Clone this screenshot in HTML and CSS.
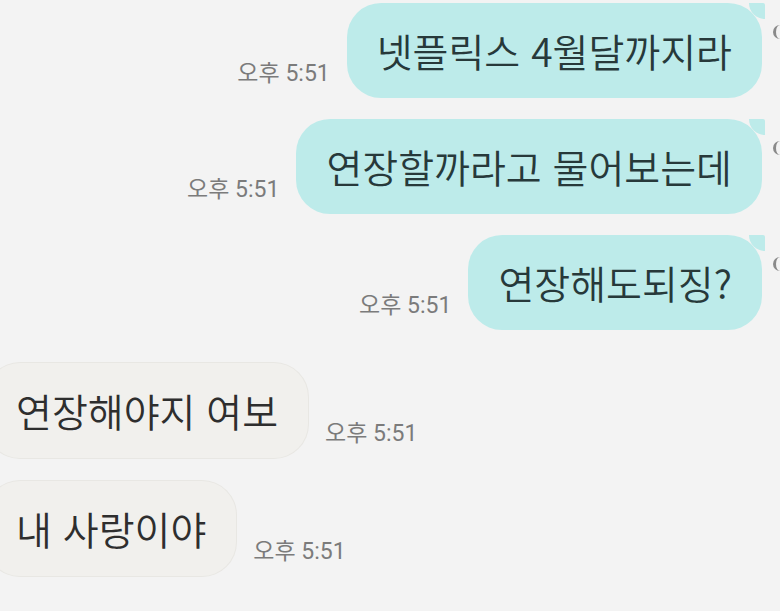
FILE: index.html
```html
<!DOCTYPE html>
<html lang="ko">
<head>
  <meta charset="UTF-8">
  <meta name="viewport" content="width=device-width, initial-scale=1.0">
  <title>채팅</title>
  <link rel="stylesheet" href="styles.css">
</head>
<body>
  <div class="chat">
    <div class="row sent">
      <span class="time">오후 5:51</span>
      <div class="bubble">넷플릭스 4월달까지라</div>
      <span class="mark"></span>
    </div>
    <div class="row sent">
      <span class="time">오후 5:51</span>
      <div class="bubble">연장할까라고 물어보는데</div>
      <span class="mark"></span>
    </div>
    <div class="row sent">
      <span class="time">오후 5:51</span>
      <div class="bubble">연장해도되징?</div>
      <span class="mark"></span>
    </div>
    <div class="row received first">
      <div class="bubble">연장해야지 여보</div>
      <span class="time">오후 5:51</span>
    </div>
    <div class="row received">
      <div class="bubble">내 사랑이야</div>
      <span class="time">오후 5:51</span>
    </div>
  </div>
</body>
</html>
```

FILE: styles.css
```css
body {
  margin: 0;
  padding: 0;
  width: 780px;
  height: 611px;
  overflow: hidden;
  background-color: #f3f3f3;
  font-family: "Noto Sans CJK KR", "Noto Sans", sans-serif;
}

.chat {
  padding-top: 3px;
}

.row {
  display: flex;
  align-items: flex-end;
  gap: 17px;
  margin-bottom: 21px;
}

.row.sent {
  justify-content: flex-end;
}

.row.received {
  justify-content: flex-start;
  margin-left: -14px;
  margin-bottom: 23px;
}

.row.first {
  margin-top: 33px;
}

.bubble {
  position: relative;
  padding: 22px 30px;
  font-size: 39px;
  font-weight: 350;
  line-height: 51px;
  border-radius: 34px;
  white-space: nowrap;
}

.sent .bubble {
  background-color: #bdebea;
  color: #27393a;
}

.sent .bubble::after {
  content: "";
  position: absolute;
  top: 0;
  right: -3px;
  width: 16px;
  height: 16px;
  background-color: #bdebea;
  border-radius: 0 2px 0 16px;
}

.received .bubble {
  background-color: #f1f0ed;
  color: #2e2e2e;
  box-shadow: 0 0 0 1px #e8e7e3;
}

.time {
  font-family: Roboto, "Noto Sans CJK KR", sans-serif;
  font-size: 23px;
  line-height: 26px;
  color: #7b7b7b;
  margin-bottom: 11px;
  white-space: nowrap;
}

.mark {
  align-self: flex-start;
  width: 10px;
  height: 14px;
  margin-top: 22px;
  margin-left: -6px;
  margin-right: -6px;
  border-left: 3px solid #8a8a8a;
  border-radius: 8px 0 0 8px;
}
```
